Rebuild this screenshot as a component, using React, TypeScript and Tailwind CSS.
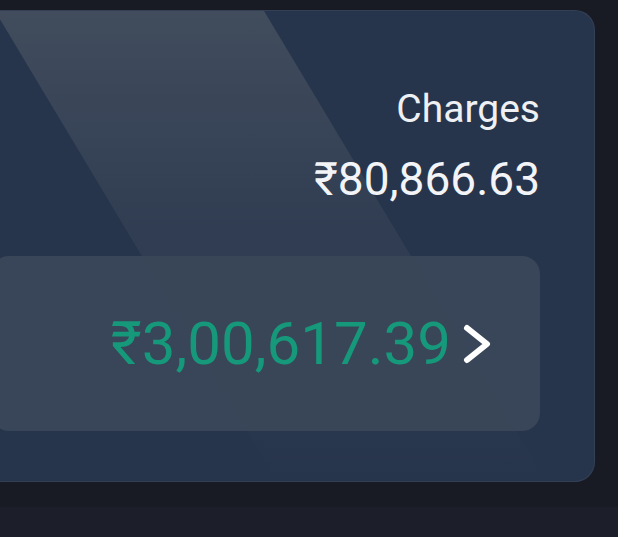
import React from 'react';

const Chevron = () => (
  <svg width="32" height="42" viewBox="0 0 32 42" fill="none" className="shrink-0">
    <path d="M6 5 L26 21 L6 37" stroke="#ffffff" strokeWidth="6" strokeLinecap="round" strokeLinejoin="round" />
  </svg>
);

const SummaryCard = () => {
  return (
    <div className="relative -ml-[24px] mt-[10px] h-[472px] w-[619px] overflow-hidden rounded-[20px] border border-white/5 bg-[#27354c]">
      {/* light diagonal band */}
      <div className="pointer-events-none absolute inset-0 bg-[linear-gradient(to_bottom,rgba(120,124,128,0.32),rgba(120,124,128,0.12)_45%,rgba(120,124,128,0))] [clip-path:polygon(18px_0,287px_0,570px_472px,301px_472px)]" />

      <div className="relative flex h-full flex-col items-end pl-[14px] pr-[54px] pt-[79px]">
        <p className="text-[39px] leading-none text-[#eef0f4]">Charges</p>
        <p className="mt-[27px] text-[46px] leading-none text-[#f2f4f7]">₹80,866.63</p>

        {/* total row */}
        <div className="mt-[54px] flex h-[175px] w-full items-center justify-end gap-[10px] rounded-[18px] bg-[#3a4759]/95 pr-[47px]">
          <span className="text-[60px] leading-none text-[#16987b]">₹3,00,617.39</span>
          <Chevron />
        </div>
      </div>
    </div>
  );
};

const App = () => {
  return (
    <div className="min-h-[537px] bg-white font-['Roboto',sans-serif]">
      <div className="h-[537px] w-[618px] overflow-hidden bg-[#181b24]">
        <SummaryCard />
        <div className="mt-[25px] h-[30px] bg-[#1c1f29]" />
      </div>
    </div>
  );
};

export default App;
